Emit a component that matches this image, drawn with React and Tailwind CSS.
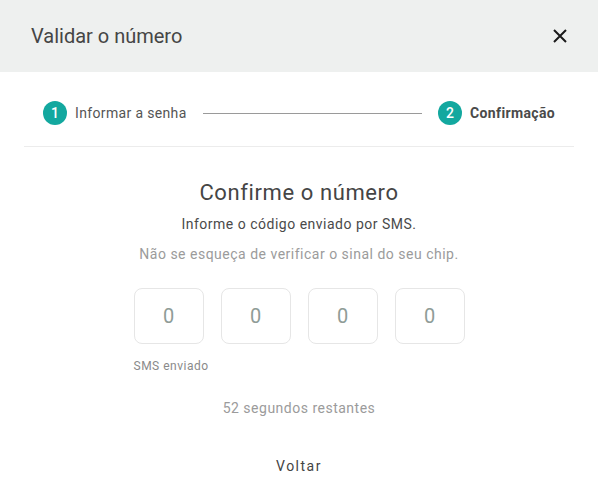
export default function App() {
  return (
    <div className="w-[598px] h-[501px] bg-white overflow-hidden" style={{ fontFamily: "Roboto, 'Liberation Sans', sans-serif" }}>
      <div className="h-[72px] bg-[#eef0ef] flex items-center justify-between pl-[31px] pr-[31px]">
        <h1 className="text-[20px] text-[#454545] font-normal">Validar o número</h1>
        <svg width="16" height="16" viewBox="0 0 16 16" className="mr-[-1px]">
          <path d="M2 2 L14 14 M14 2 L2 14" stroke="#1a1a1a" strokeWidth="2" />
        </svg>
      </div>
      <div className="mx-[24px] border-b border-[#ececec] h-[75px] pt-[8px] flex items-center px-[19px]">
        <div className="w-[24px] h-[24px] rounded-full bg-[#13a89f] text-white text-[14px] font-medium flex items-center justify-center">1</div>
        <span className="ml-[8px] text-[14px] text-[#555] tracking-[0.35px]">Informar a senha</span>
        <div className="flex-1 h-px bg-[#9a9a9a] mx-[16px]"></div>
        <div className="w-[24px] h-[24px] rounded-full bg-[#13a89f] text-white text-[14px] font-medium flex items-center justify-center">2</div>
        <span className="ml-[8px] text-[14px] text-[#4a4a4a] font-bold tracking-[0.35px]">Confirmação</span>
      </div>
      <div className="flex flex-col items-center tracking-[0.5px]">
        <h2 className="mt-[32px] text-[22px] text-[#454545] leading-[28px] tracking-[0.6px]">Confirme o número</h2>
        <p className="mt-[7px] text-[14px] text-[#4a4a4a] leading-[20px]">Informe o código enviado por SMS.</p>
        <p className="mt-[10px] text-[14px] text-[#9b9b9b] leading-[20px]">Não se esqueça de verificar o sinal do seu chip.</p>
        <div className="mt-[24px] flex flex-col">
          <div className="flex gap-[17px]">
            {[0, 1, 2, 3].map((i) => (
              <div key={i} className="w-[70px] h-[56px] border border-[#e6e6e6] rounded-[8px] flex items-center justify-center text-[20px] text-[#8f9c97] tracking-normal">0</div>
            ))}
          </div>
          <span className="mt-[14px] text-[12px] text-[#8a8a8a] leading-[16px]">SMS enviado</span>
        </div>
        <p className="mt-[24px] text-[14px] text-[#9b9b9b] leading-[20px]">52 segundos restantes</p>
        <button className="mt-[38px] text-[14px] text-[#444] tracking-[1.5px] leading-[20px]">Voltar</button>
      </div>
    </div>
  );
}
